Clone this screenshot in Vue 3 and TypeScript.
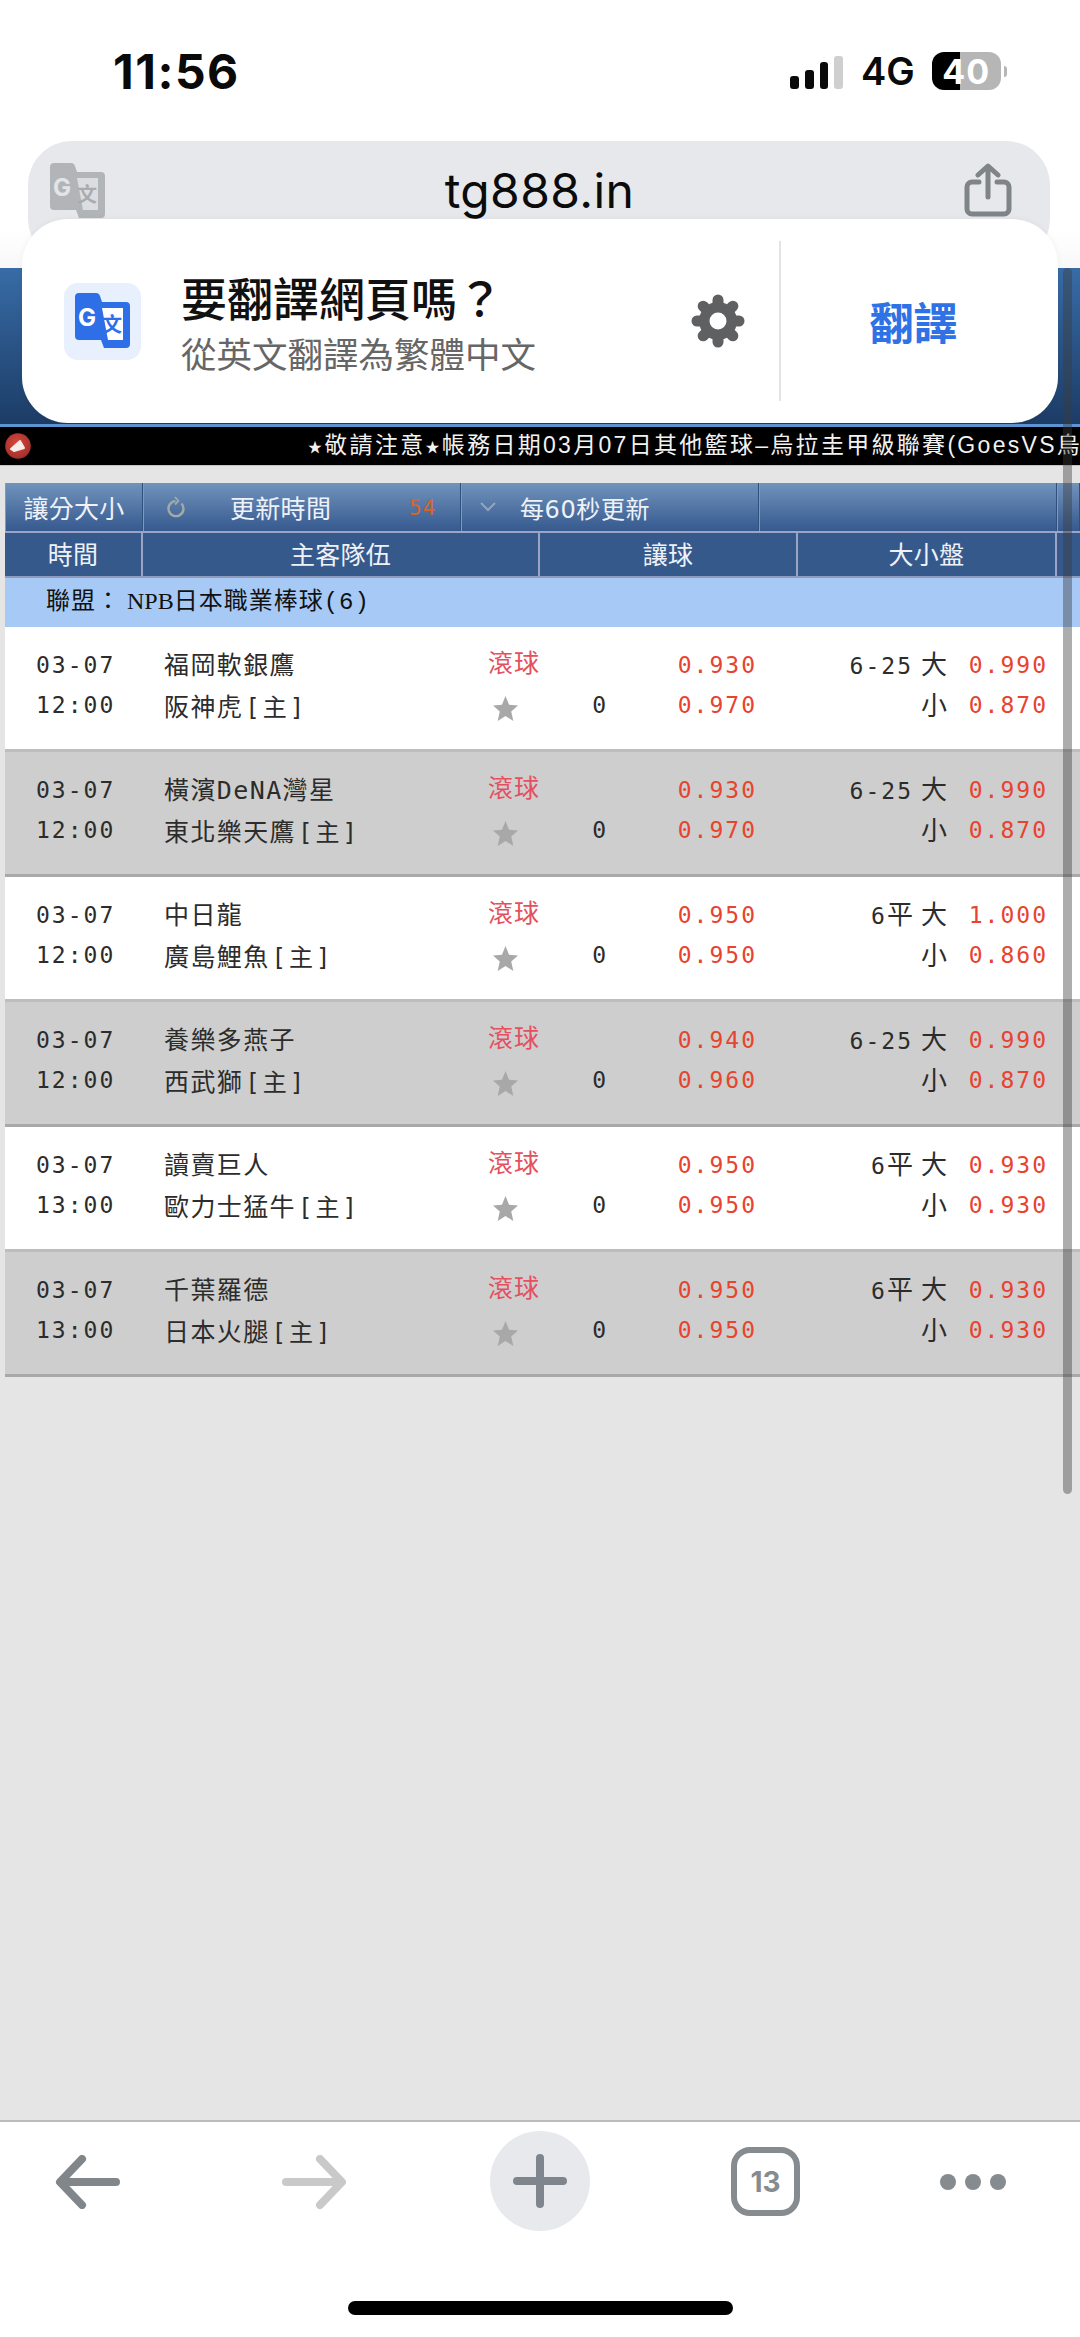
<script setup lang="ts">
interface Game {
  date: string;
  time: string;
  away: string;
  home: string;
  odd1: string;
  odd2: string;
  line: string;
  flat?: boolean;
  big: string;
  small: string;
}

const games: Game[] = [
  { date: "03-07", time: "12:00", away: "福岡軟銀鷹", home: "阪神虎", odd1: "0.930", odd2: "0.970", line: "6-25", big: "0.990", small: "0.870" },
  { date: "03-07", time: "12:00", away: "橫濱DeNA灣星", home: "東北樂天鷹", odd1: "0.930", odd2: "0.970", line: "6-25", big: "0.990", small: "0.870" },
  { date: "03-07", time: "12:00", away: "中日龍", home: "廣島鯉魚", odd1: "0.950", odd2: "0.950", line: "6", flat: true, big: "1.000", small: "0.860" },
  { date: "03-07", time: "12:00", away: "養樂多燕子", home: "西武獅", odd1: "0.940", odd2: "0.960", line: "6-25", big: "0.990", small: "0.870" },
  { date: "03-07", time: "13:00", away: "讀賣巨人", home: "歐力士猛牛", odd1: "0.950", odd2: "0.950", line: "6", flat: true, big: "0.930", small: "0.930" },
  { date: "03-07", time: "13:00", away: "千葉羅德", home: "日本火腿", odd1: "0.950", odd2: "0.950", line: "6", flat: true, big: "0.930", small: "0.930" },
];

const gearTeeth = [0, 45, 90, 135];
</script>

<template>
  <div class="screen">
    <div class="status">
      <span class="clock">11:56</span>
      <div class="status-right">
        <div class="signal">
          <i class="b1"></i><i class="b2"></i><i class="b3"></i><i class="b4"></i>
        </div>
        <span class="net">4G</span>
        <div class="battery">
          <span>40</span>
        </div>
        <i class="nub"></i>
      </div>
    </div>

    <div class="urlzone">
      <div class="urlbar">
        <svg class="url-tr" viewBox="0 0 56 56">
          <path d="M4 0h17q3 0 4 3l2 6h24a4 4 0 0 1 4 4v38a4 4 0 0 1-4 4H29l-3-8H4a4 4 0 0 1-4-4V4a4 4 0 0 1 4-4z" fill="#b2b5b8" />
          <path d="M27 15h21v32H33z" fill="#dcdde0" />
          <text x="3" y="33" class="g">G</text>
          <text x="27" y="39" class="wen">文</text>
        </svg>
        <span class="host">tg888.in</span>
        <svg class="share" viewBox="0 0 48 54" fill="none" stroke="#7e8488" stroke-width="5" stroke-linecap="round" stroke-linejoin="round">
          <path d="M15 19H8a5 5 0 0 0-5 5v22a5 5 0 0 0 5 5h32a5 5 0 0 0 5-5V24a5 5 0 0 0-5-5h-7" />
          <path d="M24 34V4M14 12l10-9 10 9" />
        </svg>
      </div>
    </div>

    <div class="sitehead"></div>
    <div class="ticker">
      <svg class="horn" viewBox="0 0 26 26">
        <defs>
          <radialGradient id="hornfill" cx="0.45" cy="0.4" r="0.6">
            <stop offset="0" stop-color="#d8483c" />
            <stop offset="1" stop-color="#a3302a" />
          </radialGradient>
        </defs>
        <circle cx="13" cy="13" r="12.800" fill="url(#hornfill)" />
        <path d="M6 16l9-8 4 7-10 3z" fill="#f6ecea" stroke="#f6ecea" stroke-width="2" stroke-linejoin="round" />
      </svg>
      <div class="ticker-text"><span class="tstar">★</span>敬請注意<span class="tstar">★</span>帳務日期03月07日其他籃球–烏拉圭甲級聯賽(GoesVS烏</div>
    </div>

    <main class="content">
      <div class="toolbar">
        <div class="tb-cell tb-a">讓分大小</div>
        <div class="tb-cell tb-b">
          <svg class="refresh" viewBox="0 0 18 22" fill="none" stroke="#a4aaa8" stroke-width="2.400">
            <path d="M14.500 7.500a7.500 7.500 0 1 1-6-2.400" />
            <path d="M8 1l3.500 4L8 8.500" stroke-width="1.800" />
          </svg>
          <span class="tb-title">更新時間</span>
          <span class="count">54</span>
        </div>
        <div class="tb-cell tb-c">
          <svg class="chev" viewBox="0 0 16 10" fill="none" stroke="#93a5bd" stroke-width="2">
            <path d="M1 1l7 7 7-7" />
          </svg>
          <span>每60秒更新</span>
        </div>
        <div class="tb-cell tb-d"></div>
        <div class="tb-cell tb-e"></div>
      </div>

      <div class="thead">
        <div class="th th-time">時間</div>
        <div class="th th-team">主客隊伍</div>
        <div class="th th-hdp">讓球</div>
        <div class="th th-ou">大小盤</div>
        <div class="th th-end"></div>
      </div>

      <div class="league">聯盟：<span class="npb">NPB</span>日本職業棒球(6)</div>

      <div v-for="(g, i) in games" :key="g.away" :class="['row', { alt: i % 2 === 1 }]">
        <div class="col-time">
          <div>{{ g.date }}</div>
          <div>{{ g.time }}</div>
        </div>
        <div class="col-team">
          <div>{{ g.away }}</div>
          <div>{{ g.home }}<span class="zhu">[主]</span></div>
        </div>
        <div class="col-live">
          <div class="live">滾球</div>
          <svg class="star" viewBox="0 0 24 24">
            <path d="M12 0l3.400 8.300 8.600.8-6.500 5.800 2 9.100-7.500-4.800L4.500 24l2-9.100L0 9.100l8.600-.8z" fill="#a8a8a8" />
          </svg>
        </div>
        <div class="col-hdp">
          <div>&nbsp;</div>
          <div>0</div>
        </div>
        <div class="col-odds">
          <div>{{ g.odd1 }}</div>
          <div>{{ g.odd2 }}</div>
        </div>
        <div class="col-line">
          <div>{{ g.line }}<span v-if="g.flat" class="flat">平</span><span class="ou">大</span></div>
          <div><span class="ou">小</span></div>
        </div>
        <div class="col-odds2">
          <div>{{ g.big }}</div>
          <div>{{ g.small }}</div>
        </div>
      </div>
    </main>

    <footer class="bottom">
      <div class="nav">
        <svg class="nav-arrow" viewBox="0 0 65 54" fill="none" stroke="#81868a" stroke-width="8" stroke-linecap="round" stroke-linejoin="round">
          <path d="M61 27H6M27 4L5 27l22 23" />
        </svg>
        <svg class="nav-arrow fwd" viewBox="0 0 65 54" fill="none" stroke="#c9c9c9" stroke-width="8" stroke-linecap="round" stroke-linejoin="round">
          <path d="M4 27h55M38 4l22 23-22 23" />
        </svg>
        <div class="plus">
          <svg viewBox="0 0 54 54" fill="none" stroke="#7f858c" stroke-width="8" stroke-linecap="round">
            <path d="M27 4v46M4 27h46" />
          </svg>
        </div>
        <div class="tabs">13</div>
        <div class="dots"><i></i><i></i><i></i></div>
      </div>
      <div class="home-bar"></div>
    </footer>

    <div class="card">
      <div class="tile">
        <svg viewBox="0 0 56 56">
          <path d="M4 0h17q3 0 4 3l2 6h24a4 4 0 0 1 4 4v38a4 4 0 0 1-4 4H29l-3-8H4a4 4 0 0 1-4-4V4a4 4 0 0 1 4-4z" fill="#2e6fe8" />
          <path d="M27 15h21v32H33z" fill="#fff" />
          <text x="3" y="33" class="g-blue">G</text>
          <text x="27" y="39" class="wen-blue">文</text>
        </svg>
      </div>
      <div class="card-text">
        <div class="card-title">要翻譯網頁嗎？</div>
        <div class="card-sub">從英文翻譯為繁體中文</div>
      </div>
      <svg class="gear" viewBox="0 0 54 54">
        <circle cx="27" cy="27" r="19" fill="#5f6062" />
        <line
          v-for="a in gearTeeth"
          :key="a"
          x1="27"
          y1="6"
          x2="27"
          y2="48"
          stroke="#5f6062"
          stroke-width="11"
          stroke-linecap="round"
          :transform="`rotate(${a} 27 27)`"
        />
        <circle cx="27" cy="27" r="8.500" fill="#fff" />
      </svg>
      <div class="divider"></div>
      <div class="translate">翻譯</div>
    </div>

    <div class="scrollbar"></div>
  </div>
</template>

<style scoped>
.screen {
  position: relative;
  width: 1080px;
  height: 2337px;
  display: flex;
  flex-direction: column;
  overflow: hidden;
  background: #fff;
  font-family: "Noto Sans CJK TC", "Noto Sans", sans-serif;
}

/* status bar */
.status {
  height: 141px;
  flex: none;
  position: relative;
}
.clock {
  position: absolute;
  left: 113px;
  top: 40px;
  font-family: Inter, "Liberation Sans", sans-serif;
  font-size: 48px;
  letter-spacing: 1.5px;
  line-height: 64px;
  font-weight: 700;
  color: #0a0a0a;
}
.status-right {
  position: absolute;
  left: 790px;
  top: 52px;
  display: flex;
  align-items: center;
  height: 38px;
}
.signal {
  display: flex;
  align-items: flex-end;
  gap: 6px;
  height: 33px;
  width: 53px;
  margin-top: 3px;
}
.signal i {
  display: block;
  width: 9px;
  border-radius: 3px;
  background: #0a0a0a;
}
.signal .b1 { height: 13px; }
.signal .b2 { height: 19px; }
.signal .b3 { height: 27px; }
.signal .b4 { height: 33px; background: #cfcfcf; }
.net {
  margin-left: 18px;
  font-family: Inter, "Liberation Sans", sans-serif;
  font-size: 38px;
  font-weight: 600;
  line-height: 38px;
  color: #0a0a0a;
}
.battery {
  margin-left: 17px;
  width: 69px;
  height: 38px;
  border-radius: 12px;
  background: linear-gradient(90deg, #000 0 28px, #b6b6b6 28px);
  display: flex;
  align-items: center;
  justify-content: center;
  color: #fff;
  font-family: Inter, "Liberation Sans", sans-serif;
  font-size: 34px;
  font-weight: 700;
  letter-spacing: 1px;
}
.nub {
  width: 3px;
  height: 11px;
  margin-left: 3px;
  border-radius: 0 3px 3px 0;
  background: #b6b6b6;
}

/* url bar */
.urlzone {
  height: 127px;
  flex: none;
  padding: 0 30px 0 28px;
  background: linear-gradient(#fff 70%, #f8f8f8);
}
.urlbar {
  height: 100px;
  border-radius: 44px;
  background: #e7e8ec;
  display: flex;
  align-items: flex-start;
  justify-content: space-between;
  padding: 22px 38px 0 22px;
}
.url-tr {
  width: 56px;
  height: 56px;
}
.g {
  font: 700 24px Inter, "Liberation Sans", sans-serif;
  fill: #e3e4e6;
}
.wen {
  font: 700 20px "Noto Sans CJK TC", sans-serif;
  fill: #a9acaf;
}
.host {
  margin: -2px 0 0 9px;
  font-family: Inter, "Liberation Sans", sans-serif;
  font-size: 48px;
  letter-spacing: 0.4px;
  line-height: 60px;
  color: #0b0b0b;
}
.share {
  width: 48px;
  height: 54px;
}

/* page behind the card */
.sitehead {
  height: 156px;
  flex: none;
  background: linear-gradient(#386ca6, #1c3c66);
  border-bottom: 3px solid #5d94d2;
}
.ticker {
  height: 38px;
  flex: none;
  display: flex;
  align-items: center;
  overflow: hidden;
  background: #000;
  padding-left: 5px;
}
.horn {
  width: 26px;
  height: 26px;
  flex: none;
}
.ticker-text {
  margin-left: 277px;
  white-space: nowrap;
  font-family: "Liberation Sans", "Noto Sans CJK TC", sans-serif;
  font-size: 23px;
  letter-spacing: 2.3px;
  line-height: 38px;
  color: #f2f2f2;
}
.tstar {
  font-size: 14px;
  vertical-align: 1px;
}
.content {
  flex: 1;
  background: #e5e5e5;
  padding: 17px 0 0 5px;
  border-top: 1px solid #c4c4c4;
  color: #222;
}

.toolbar {
  display: flex;
  height: 48px;
  color: #eef2f8;
  font-size: 25px;
  letter-spacing: 0.3px;
}
.tb-cell {
  display: flex;
  align-items: center;
  box-sizing: border-box;
  background: linear-gradient(#7093bc, #36598f);
  border-right: 1px solid #2f4f7c;
  border-left: 1px solid #7f9abd;
}
.tb-a {
  width: 138px;
  justify-content: center;
}
.tb-b {
  width: 318px;
  position: relative;
}
.refresh {
  position: absolute;
  left: 23px;
  top: 13px;
  width: 18px;
  height: 22px;
}
.tb-title {
  position: absolute;
  left: 86px;
}
.count {
  position: absolute;
  left: 265px;
  top: 12px;
  font-family: "DejaVu Sans Mono", monospace;
  font-size: 21px;
  letter-spacing: 1px;
  line-height: 26px;
  color: #d8642c;
}
.tb-c {
  width: 298px;
  padding-left: 18px;
  gap: 24px;
  font-family: "DejaVu Sans", "Noto Sans CJK TC", sans-serif;
  font-size: 24px;
  letter-spacing: 0.6px;
}
.chev {
  width: 16px;
  height: 10px;
}
.tb-d {
  width: 298px;
}
.tb-e {
  flex: 1;
}

.thead {
  display: flex;
  height: 47px;
  color: #eef2f8;
  font-size: 25px;
  letter-spacing: 0.3px;
  background: #36598c;
  border-top: 2px solid #9ca3c5;
  border-bottom: 2px solid #8f9bbd;
  box-sizing: border-box;
}
.th {
  display: flex;
  align-items: center;
  justify-content: center;
  padding-bottom: 3px;
  border-right: 2px solid #9ca3c5;
  box-sizing: border-box;
}
.th-time { width: 138px; }
.th-team { width: 397px; }
.th-hdp { width: 258px; }
.th-ou { width: 259px; }
.th-end { flex: 1; border-right: 0; }

.league {
  height: 49px;
  padding-left: 41px;
  line-height: 46px;
  font-family: "Liberation Mono", "Noto Sans CJK TC", monospace;
  font-size: 24px;
  letter-spacing: 1px;
  color: #111;
  background: #a6c9f6;
}
.npb {
  font-family: "Liberation Serif", serif;
  font-size: 24px;
  margin-left: 6px;
  letter-spacing: 0;
}

.row {
  display: flex;
  height: 125px;
  box-sizing: border-box;
  padding-top: 18px;
  background: #fff;
  border-bottom: 3px solid #bdbdbd;
  font-family: "DejaVu Sans Mono", "Noto Sans CJK TC", monospace;
  font-size: 23px;
  line-height: 40px;
  letter-spacing: 2px;
  color: #2c2c2c;
}
.row.alt {
  background: #cecece;
  border-bottom-color: #a9a9a9;
}
.col-time {
  width: 159px;
  padding-left: 31px;
  box-sizing: border-box;
}
.col-team {
  width: 324px;
  font-size: 25px;
  letter-spacing: 1.4px;
  line-height: 42px;
}
.zhu {
  font-size: 24px;
  margin-left: 2px;
  letter-spacing: 3px;
}
.col-live {
  width: 70px;
}
.live {
  font-size: 25px;
  letter-spacing: 1px;
  line-height: 38px;
  color: #e4505e;
}
.star {
  display: block;
  width: 25px;
  height: 25px;
  margin: 13px 0 0 5px;
}
.col-hdp {
  width: 50px;
  text-align: right;
}
.col-odds {
  width: 149px;
  text-align: right;
  color: #e8432f;
}
.col-line {
  width: 190px;
  text-align: right;
}
.flat {
  font-size: 26px;
  letter-spacing: 0;
}
.ou {
  font-size: 26px;
  letter-spacing: 0;
  margin-left: 8px;
}
.col-odds2 {
  width: 101px;
  text-align: right;
  color: #e8432f;
}

/* browser toolbar */
.bottom {
  height: 217px;
  flex: none;
  box-sizing: border-box;
  border-top: 2px solid #bcbcbc;
  background: #fff;
  position: relative;
}
.nav {
  position: relative;
  height: 130px;
}
.nav-arrow {
  position: absolute;
  top: 33px;
  left: 55px;
  width: 65px;
  height: 54px;
}
.nav-arrow.fwd {
  left: 282px;
}
.plus {
  position: absolute;
  left: 490px;
  top: 9px;
  width: 100px;
  height: 100px;
  border-radius: 50%;
  background: #e8e9ed;
  display: flex;
  align-items: center;
  justify-content: center;
}
.plus svg {
  width: 54px;
  height: 54px;
}
.tabs {
  position: absolute;
  left: 731px;
  top: 25px;
  width: 69px;
  height: 69px;
  box-sizing: border-box;
  border: 6px solid #868b8f;
  border-radius: 19px;
  display: flex;
  align-items: center;
  justify-content: center;
  color: #868b8f;
  font-family: Inter, "Liberation Sans", sans-serif;
  font-size: 28px;
  font-weight: 700;
}
.dots {
  position: absolute;
  left: 940px;
  top: 52px;
  display: flex;
  gap: 9px;
}
.dots i {
  display: block;
  width: 16px;
  height: 16px;
  border-radius: 50%;
  background: #868b8f;
}
.home-bar {
  position: absolute;
  left: 348px;
  top: 179px;
  width: 385px;
  height: 14px;
  border-radius: 7px;
  background: #000;
}

/* translate prompt */
.card {
  position: absolute;
  left: 22px;
  top: 219px;
  width: 1036px;
  height: 204px;
  display: flex;
  align-items: center;
  border-radius: 46px;
  background: #fff;
  box-shadow: 0 0 6px rgba(0, 0, 0, 0.05);
}
.tile {
  margin-left: 42px;
  width: 77px;
  height: 77px;
  flex: none;
  border-radius: 14px;
  background: #e8f0fe;
  display: flex;
  align-items: center;
  justify-content: center;
}
.tile svg {
  width: 56px;
  height: 56px;
}
.g-blue {
  font: 700 24px Inter, "Liberation Sans", sans-serif;
  fill: #fff;
}
.wen-blue {
  font: 700 20px "Noto Sans CJK TC", sans-serif;
  fill: #2e6fe8;
}
.card-text {
  margin-left: 40px;
  width: 510px;
  flex: none;
}
.card-title {
  font-size: 46px;
  line-height: 58px;
  font-weight: 500;
  color: #111;
}
.card-sub {
  margin-top: 6px;
  font-size: 35.5px;
  line-height: 44px;
  color: #666;
}
.gear {
  width: 54px;
  height: 54px;
  flex: none;
  margin-right: 34px;
}
.divider {
  width: 2px;
  height: 160px;
  flex: none;
  background: #e4e4e4;
}
.translate {
  flex: 1;
  padding-right: 12px;
  text-align: center;
  font-size: 44px;
  font-weight: 700;
  color: #2f72e6;
}

.scrollbar {
  position: absolute;
  left: 1063px;
  top: 268px;
  width: 9px;
  height: 1226px;
  border-radius: 5px;
  background: rgba(60, 60, 60, 0.42);
}
</style>

<style>
body {
  margin: 0;
}
</style>
